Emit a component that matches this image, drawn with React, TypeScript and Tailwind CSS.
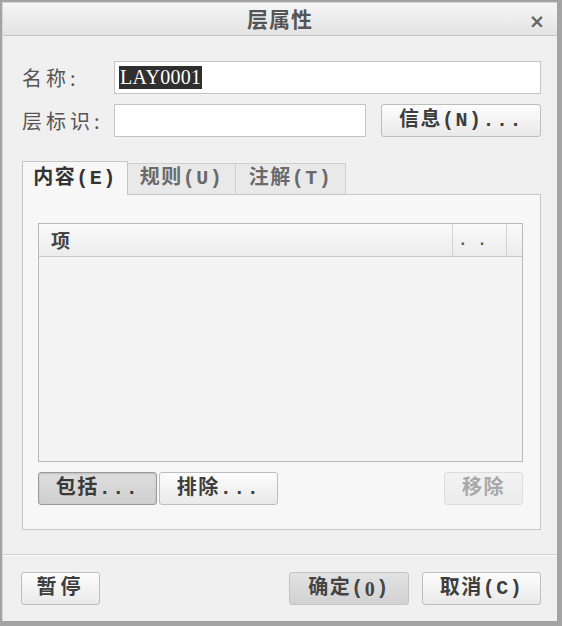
import React from "react";

const cjk = { fontFamily: '"Noto Sans CJK SC", "Noto Sans", sans-serif' };
const mixed = { fontFamily: '"Liberation Mono", "Noto Sans CJK SC", monospace' };
const serif = { fontFamily: '"Liberation Serif", serif' };

function Btn({
  children,
  className = "",
  variant = "normal",
}: {
  children: React.ReactNode;
  className?: string;
  variant?: "normal" | "pressed" | "default" | "disabled";
}) {
  const v =
    variant === "pressed"
      ? "border-[#9a9a9a] bg-gradient-to-b from-[#dedede] to-[#cfcfcf] text-[#3a3a3a] shadow-[inset_0_1px_2px_rgba(0,0,0,0.15)]"
      : variant === "default"
      ? "border-[#c4c4c4] bg-gradient-to-b from-[#e2e2e2] to-[#d2d2d2] text-[#444]"
      : variant === "disabled"
      ? "border-[#dcdcdc] bg-gradient-to-b from-[#f3f3f3] to-[#ebebeb] text-[#a8a8a8]"
      : "border-[#bdbdbd] bg-gradient-to-b from-[#fdfdfd] to-[#e9e9e9] text-[#3d3d3d]";
  return (
    <div
      className={`flex h-[33px] items-center justify-center rounded-[3px] border text-[20px] font-bold tracking-[1.5px] ${v} ${className}`}
      style={mixed}
    >
      {children}
    </div>
  );
}

export default function App() {
  return (
    <div className="h-[626px] w-[562px] bg-[#a3a3a3] pb-[5px] pl-[2px] pr-[5px] pt-[2px]">
      <div className="flex h-full w-full flex-col border-l border-t border-[#d6d6d6] bg-[#f0f0f0]">
        {/* title bar */}
        <div className="relative flex h-[33px] items-center justify-center border-b border-[#c6c6c6] bg-gradient-to-b from-[#f6f6f6] to-[#e3e3e3]">
          <span className="text-[21px] font-bold tracking-[1px] text-[#555]" style={cjk}>
            层属性
          </span>
          <span
            className="absolute right-[12px] top-[4px] text-[19px] font-bold text-[#666]"
            style={{ fontFamily: '"DejaVu Sans", sans-serif' }}
          >
            ×
          </span>
        </div>

        <div className="flex flex-1 flex-col pl-[19px] pr-[16px]">
          {/* name row */}
          <div className="mt-[25px] flex h-[33px] items-center">
            <div className="w-[92px] text-[20px] tracking-[4px] text-[#555]" style={cjk}>
              名称:
            </div>
            <div className="flex h-[33px] flex-1 items-center border border-[#c4c4c4] bg-white pl-[4px]">
              <span
                className="bg-[#2f2f2f] px-[1px] text-[20px] leading-[23px] tracking-[0.3px] text-white"
                style={serif}
              >
                LAY0001
              </span>
            </div>
          </div>

          {/* id row */}
          <div className="mt-[10px] flex h-[33px] items-center">
            <div className="w-[92px] text-[20px] tracking-[4px] text-[#555]" style={cjk}>
              层标识:
            </div>
            <div className="h-[33px] w-[252px] border border-[#c4c4c4] bg-white" />
            <div className="flex-1" />
            <Btn className="w-[160px]">信息(N)...</Btn>
          </div>

          {/* tabs */}
          <div className="mt-[24px] flex h-[33px] items-end">
            <div
              className="relative z-10 -mb-px flex h-[34px] w-[106px] items-center justify-center border border-b-0 border-[#c6c6c6] bg-[#f7f7f7] text-[20px] font-bold tracking-[1.5px] text-[#333]"
              style={mixed}
            >
              内容(E)
            </div>
            <div
              className="flex h-[31px] w-[108px] items-center justify-center border-r border-t border-[#cfcfcf] bg-[#e9e9e9] text-[20px] font-bold tracking-[1.5px] text-[#6a6a6a]"
              style={mixed}
            >
              规则(U)
            </div>
            <div
              className="flex h-[31px] w-[110px] items-center justify-center border-r border-t border-[#cfcfcf] bg-[#e9e9e9] text-[20px] font-bold tracking-[1.5px] text-[#6a6a6a]"
              style={mixed}
            >
              注解(T)
            </div>
          </div>

          {/* panel */}
          <div className="flex h-[336px] flex-col border border-[#c6c6c6] bg-[#f7f7f7] pl-[15px] pr-[17px] pt-[28px]">
            <div className="flex h-[239px] flex-col border border-[#b9b9b9] bg-[#f4f4f4]">
              <div className="flex h-[33px] border-b border-[#c9c9c9] bg-gradient-to-b from-[#fafafa] to-[#ececec]">
                <div className="flex flex-1 items-center pl-[12px] text-[19px] font-bold text-[#444]" style={cjk}>
                  项
                </div>
                <div
                  className="flex w-[54px] items-end border-l border-[#d4d4d4] pb-[7px] pl-[5px] text-[16px] font-bold leading-none text-[#555]"
                  style={{ fontFamily: '"Liberation Mono", monospace' }}
                >
                  . .
                </div>
                <div className="w-[16px] border-l border-[#d4d4d4]" />
              </div>
              <div className="flex-1" />
            </div>

            <div className="mt-[10px] flex h-[33px] items-center">
              <Btn variant="pressed" className="w-[119px]">
                包括...
              </Btn>
              <Btn className="ml-[2px] w-[119px]">排除...</Btn>
              <div className="flex-1" />
              <Btn variant="disabled" className="w-[79px]">
                移除
              </Btn>
            </div>
          </div>
        </div>

        {/* separator */}
        <div className="mt-[22px] h-[2px] border-t border-[#d2d2d2] bg-white/70" />

        {/* bottom buttons */}
        <div className="flex items-center pb-[16px] pl-[18px] pr-[16px] pt-[16px]">
          <Btn className="w-[79px] tracking-[4px]">暂停</Btn>
          <div className="flex-1" />
          <Btn variant="default" className="w-[120px]">
            确定(<span style={serif}>0</span>)
          </Btn>
          <Btn className="ml-[13px] w-[119px]">取消(C)</Btn>
        </div>
      </div>
    </div>
  );
}
